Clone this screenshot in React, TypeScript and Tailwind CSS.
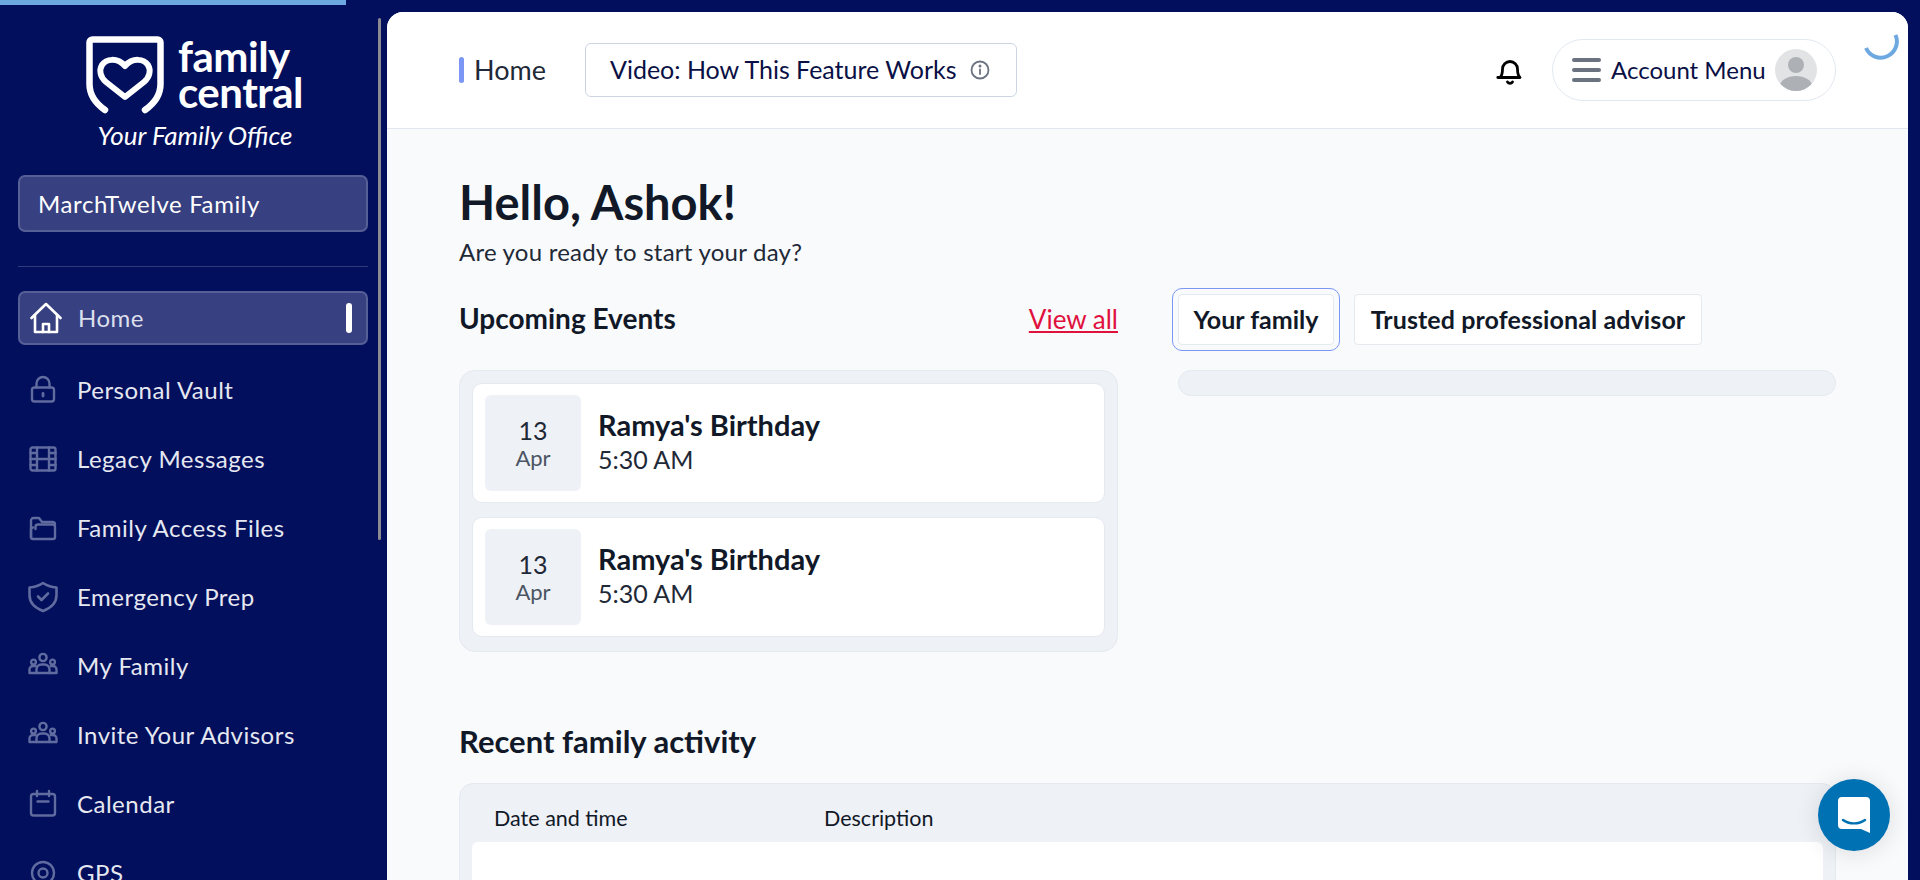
import React from "react";

const font = { fontFamily: '"Lato", "Noto Sans", sans-serif' };

function Ico({ children, w = 30, h = 30, vb = "0 0 30 30" }: { children: React.ReactNode; w?: number; h?: number; vb?: string }) {
  return (
    <svg width={w} height={h} viewBox={vb} fill="none" stroke="currentColor" strokeWidth="2.400" strokeLinecap="round" strokeLinejoin="round" className="shrink-0">
      {children}
    </svg>
  );
}

const UsersIcon = () => (
  <Ico>
    <circle cx="15" cy="6.500" r="3.600" />
    <circle cx="5.500" cy="11" r="2.400" />
    <circle cx="24.500" cy="11" r="2.400" />
    <path d="M8.500 22v-3.500a5 5 0 0 1 5-5h3a5 5 0 0 1 5 5V22" />
    <path d="M1.500 22h27v-3.500a3.500 3.500 0 0 0-3.500-3.500h-2M7.500 15H5a3.500 3.500 0 0 0-3.500 3.500V22" />
  </Ico>
);

const items: { label: string; icon: React.ReactNode }[] = [
  {
    label: "Personal Vault",
    icon: (
      <Ico>
        <rect x="4" y="12.500" width="22" height="14" rx="2.500" />
        <path d="M8.500 12.500V8.500a6.500 6.500 0 0 1 13 0v4" />
        <path d="M15 18.500v2.500" strokeWidth="2.800" />
      </Ico>
    ),
  },
  {
    label: "Legacy Messages",
    icon: (
      <Ico>
        <rect x="2.500" y="3.500" width="25" height="23" rx="2" />
        <path d="M9 3.500v23M21 3.500v23M2.500 9h6.500M2.500 15h25M2.500 21h6.500M21 9h6.500M21 21h6.500" />
      </Ico>
    ),
  },
  {
    label: "Family Access Files",
    icon: (
      <Ico>
        <path d="M3 24V7.500A2.500 2.500 0 0 1 5.500 5h5.500l3 4h10.500A2.500 2.500 0 0 1 27 11.500" />
        <path d="M3 24a2 2 0 0 0 2 2h20a2 2 0 0 0 2-2v-10a2.500 2.500 0 0 0-2.500-2.500H10a2.500 2.500 0 0 0-2.500 2.500v2" />
        <path d="M3 24V16.500a2 2 0 0 1 2-2" />
      </Ico>
    ),
  },
  {
    label: "Emergency Prep",
    icon: (
      <Ico w={32} h={32} vb="0 0 32 32">
        <path d="M16 2c3.500 2.500 8 4 13.500 4.500V14c0 7.500-5.500 13-13.500 16C8 27 2.500 21.500 2.500 14V6.500C8 6 12.500 4.500 16 2z" strokeWidth="2.600" />
        <path d="m11 15.500 3.500 3.500 6.500-6.500" strokeWidth="2.600" />
      </Ico>
    ),
  },
  { label: "My Family", icon: <UsersIcon /> },
  { label: "Invite Your Advisors", icon: <UsersIcon /> },
  {
    label: "Calendar",
    icon: (
      <Ico>
        <rect x="3" y="5" width="24" height="21.500" rx="2.500" />
        <path d="M9 2v5M21 2v5M9.500 12.500h11" />
      </Ico>
    ),
  },
  {
    label: "GPS",
    icon: (
      <Ico>
        <circle cx="15" cy="15" r="11" />
        <circle cx="15" cy="15" r="4.500" />
      </Ico>
    ),
  },
];

function EventCard() {
  return (
    <div className="flex h-[120px] shrink-0 items-center rounded-[10px] border border-[#e5e9f0] bg-white pl-[12px]">
      <div className="flex h-[96px] w-[96px] flex-col items-center justify-center rounded-[6px] bg-[#eef1f6]">
        <span className="text-[25px] leading-[29px] text-[#1f2937]">13</span>
        <span className="text-[22px] leading-[25px] text-[#4b5563]">Apr</span>
      </div>
      <div className="ml-[17px] flex -translate-y-[2px] flex-col">
        <span className="text-[29px] leading-[36px] font-bold text-[#111827]">Ramya's Birthday</span>
        <span className="text-[25px] leading-[32px] text-[#1f2937]">5:30 AM</span>
      </div>
    </div>
  );
}

export default function App() {
  return (
    <div style={font} className="relative flex h-[880px] w-[1920px] overflow-hidden bg-[#020f5c]">
      <div className="absolute top-0 left-0 h-[5px] w-[346px] bg-[#6ea8e0]" />
      <div className="absolute top-[18px] left-[378px] h-[522px] w-[3px] rounded-full bg-[#8a8a90]" />

      <aside className="flex h-[880px] w-[387px] shrink-0 flex-col overflow-hidden pr-[19px] pl-[18px] text-white">
        <div className="mt-[36px] flex shrink-0 items-start pl-[68px]">
          <svg width="78" height="78" viewBox="0 0 78 78" fill="none" stroke="white" strokeLinecap="round" strokeLinejoin="round" className="shrink-0">
            <path d="M19 74C9 67 3.500 59 3.500 48V6.500a3 3 0 0 1 3-3h65a3 3 0 0 1 3 3V48c0 11-5.500 19-15.500 26" strokeWidth="6.500" />
            <path d="M39 61 20 46c-6-5-7-12-4-17 4-6 15-8 23 1 8-9 19-7 23-1 3 5 2 12-4 17z" strokeWidth="6" />
          </svg>
          <div className="ml-[14px] flex flex-col gap-0 pt-[2px] text-[42px] leading-[36px] font-bold tracking-[-0.5px]">
            <span>family</span>
            <span>central</span>
          </div>
        </div>
        <div className="mt-[6px] shrink-0 pl-[4px] text-center text-[26px] leading-[30px] italic">Your Family Office</div>

        <div className="mt-[25px] flex h-[57px] shrink-0 items-center rounded-[7px] border-2 border-[#565f96] bg-[#374080] pl-[18px] text-[24px] tracking-[0.6px]">
          MarchTwelve Family
        </div>
        <div className="mt-[34px] h-px shrink-0 bg-[#2f3a7c]" />

        <div className="mt-[24px] flex h-[54px] shrink-0 items-center rounded-[7px] border-2 border-[#565f96] bg-[#374080] pr-[14px] pl-[10px]">
          <svg width="32" height="32" viewBox="0 0 32 32" fill="none" stroke="white" strokeWidth="2.600" strokeLinecap="round" strokeLinejoin="round" className="shrink-0">
            <path d="M1.500 16 16 2l14.500 14" />
            <path d="M5 13v17h22V13" />
            <path d="M13 30v-8h6v8" />
          </svg>
          <span className="ml-[16px] text-[24px] tracking-[0.5px] text-[#dcdfec]">Home</span>
          <span className="ml-auto h-[30px] w-[6px] rounded-full bg-white" />
        </div>

        <nav className="mt-[10px] flex shrink-0 flex-col">
          {items.map((it) => (
            <div key={it.label} className="flex h-[69px] shrink-0 items-center">
              <span className="flex w-[59px] justify-center text-[#606b9f]">
                <span className="flex w-[32px] -translate-x-[5px] justify-center">{it.icon}</span>
              </span>
              <span className="text-[24px] tracking-[0.5px] text-[#e6e8f1]">{it.label}</span>
            </div>
          ))}
        </nav>
      </aside>

      <main className="relative mt-[12px] mr-[12px] flex h-[868px] flex-1 flex-col overflow-hidden rounded-t-[16px] bg-[#f8fafc]">
        <header className="flex h-[117px] shrink-0 items-center border-b border-[#e2e8f0] bg-white px-[72px]">
          <span className="h-[26px] w-[5px] rounded-full bg-[#7b96f5]" />
          <span className="ml-[10px] text-[27px] text-[#1f2937]">Home</span>
          <div className="ml-[39px] flex h-[54px] items-center rounded-[6px] border border-[#cbd5e1] bg-white pr-[26px] pl-[24px]">
            <span className="text-[25px] text-[#0a1045]">Video: How This Feature Works</span>
            <svg width="20" height="20" viewBox="0 0 20 20" fill="none" stroke="#6b7280" strokeWidth="1.800" strokeLinecap="round" className="ml-[13px]">
              <circle cx="10" cy="10" r="8.500" />
              <path d="M10 9.500v4.500" />
              <circle cx="10" cy="6" r="0.600" fill="#6b7280" />
            </svg>
          </div>
          <svg width="28" height="30" viewBox="0 0 28 30" fill="none" stroke="black" strokeWidth="2.800" strokeLinecap="round" strokeLinejoin="round" className="mr-[28px] ml-auto">
            <path d="M4 22.500c2-2 2.500-4 2.500-8.500a7.500 7.500 0 0 1 15 0c0 4.500.5 6.500 2.500 8.500H1.800z" />
            <path d="M11.500 27a3 3 0 0 0 5 0" />
          </svg>
          <div className="flex h-[62px] w-[284px] items-center rounded-full border border-[#e2e8f0] bg-white pl-[19px]">
            <span className="flex w-[29px] flex-col gap-[6px]">
              <span className="h-[4px] rounded-full bg-[#6b7280]" />
              <span className="h-[4px] rounded-full bg-[#6b7280]" />
              <span className="h-[4px] rounded-full bg-[#6b7280]" />
            </span>
            <span className="ml-[10px] text-[24px] text-[#0a1045]">Account Menu</span>
            <svg width="42" height="42" viewBox="0 0 42 42" className="ml-[9px] shrink-0">
              <clipPath id="av"><circle cx="21" cy="21" r="21" /></clipPath>
              <g clipPath="url(#av)">
                <rect width="42" height="42" fill="#e2e3e5" />
                <circle cx="21" cy="16" r="8" fill="#adb1b5" />
                <ellipse cx="21" cy="37" rx="16" ry="10" fill="#adb1b5" />
              </g>
            </svg>
          </div>
        </header>

        <svg width="38" height="30" viewBox="0 0 38 30" fill="none" stroke="#6ea8e0" strokeWidth="4" className="absolute top-[20px] right-[9px]">
          <path d="M34.500 3A16 16 0 0 1 5 16" />
        </svg>

        <section className="flex-1 overflow-hidden px-[72px] pt-[48px]">
          <h1 className="h-[50px] text-[47px] leading-[50px] font-bold text-[#111827]">Hello, Ashok!</h1>
          <p className="mt-[10px] h-[30px] text-[24px] leading-[30px] tracking-[0.23px] text-[#1f2937]">Are you ready to start your day?</p>

          <div className="mt-[27px] flex gap-[60px]">
            <div className="w-[659px] shrink-0">
              <div className="flex h-[51px] items-center justify-between">
                <h2 className="-translate-y-[2px] text-[28px] font-bold text-[#111827]">Upcoming Events</h2>
                <a className="text-[26px] text-[#e0113c] underline">View all</a>
              </div>
              <div className="mt-[25px] flex h-[282px] flex-col gap-[14px] rounded-[16px] border border-[#e5e9f0] bg-[#eef1f6] px-[12px] py-[12px]">
                <EventCard />
                <EventCard />
              </div>
            </div>
            <div className="w-[658px] shrink-0">
              <div className="flex gap-[20px]">
                <div className="flex h-[51px] w-[156px] items-center justify-center rounded-[4px] border border-[#e5e9f0] bg-white text-[25px] font-bold text-[#111827] outline-1 outline-offset-[5px] outline-[#7b96f5]">
                  Your family
                </div>
                <div className="flex h-[51px] w-[348px] items-center justify-center rounded-[4px] border border-[#e5e9f0] bg-white text-[25px] tracking-[0.1px] font-bold text-[#111827]">
                  Trusted professional advisor
                </div>
              </div>
              <div className="mt-[25px] h-[26px] rounded-[13px] border border-[#e5e9f0] bg-[#eef1f6]" />
            </div>
          </div>

          <h2 className="mt-[71px] h-[36px] text-[31px] leading-[36px] font-bold text-[#111827]">Recent family activity</h2>
          <div className="mt-[24px] h-[200px] rounded-[14px] border border-[#e5e9f0] bg-[#eef1f6] px-[12px]">
            <div className="flex h-[58px] items-center pt-[11px] pl-[22px] text-[21.500px] text-[#111827]">
              <span className="w-[330px]">Date and time</span>
              <span>Description</span>
            </div>
            <div className="h-[140px] rounded-t-[6px] bg-white" />
          </div>
        </section>

        <button className="absolute top-[767px] left-[1431px] flex h-[72px] w-[72px] items-center justify-center rounded-full bg-[#0071b2] shadow-[0_2px_24px_rgba(0,0,0,0.12)]">
          <svg width="32" height="36" viewBox="0 0 32 36">
            <path d="M4 0h24a4 4 0 0 1 4 4v32l-9-4H4a4 4 0 0 1-4-4V4a4 4 0 0 1 4-4z" fill="white" />
            <path d="M5 23c6 4.500 16 4.500 22 0" stroke="#0071b2" strokeWidth="2.400" fill="none" strokeLinecap="round" />
          </svg>
        </button>
      </main>
    </div>
  );
}
